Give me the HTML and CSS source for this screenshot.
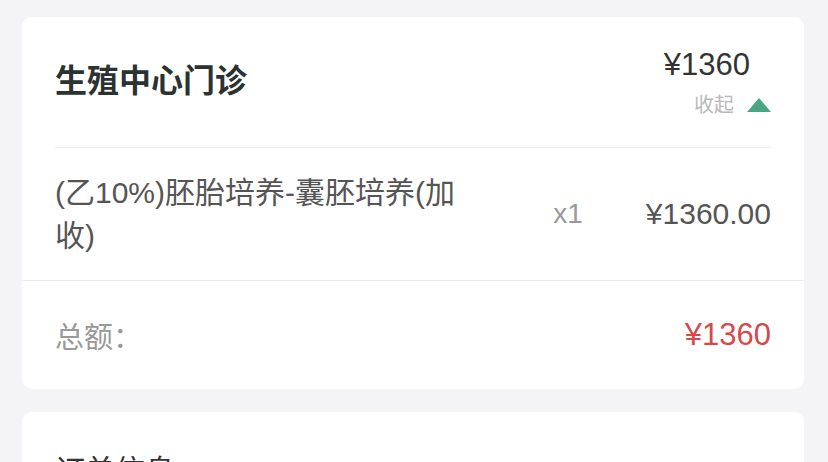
FILE: index.html
```html
<!DOCTYPE html>
<html lang="zh-CN">
<head>
  <meta charset="UTF-8">
  <meta name="viewport" content="width=device-width, initial-scale=1.0">
  <title>订单详情</title>
  <link rel="stylesheet" href="styles.css">
</head>
<body>

<div class="card">
  <div class="card-head">
    <div class="dept">生殖中心门诊</div>
    <div class="head-right">
      <div class="head-price">¥1360</div>
      <div class="toggle">收起 <span class="arrow-up"></span></div>
    </div>
  </div>

  <div class="item-row">
    <div class="item-name">(乙10%)胚胎培养-囊胚培养(加收)</div>
    <div class="item-qty">x1</div>
    <div class="item-price">¥1360.00</div>
  </div>

  <div class="total-row">
    <div class="total-label">总额：</div>
    <div class="total-price">¥1360</div>
  </div>
</div>

<div class="card">
  <div class="card-title">订单信息</div>
</div>

</body>
</html>
```

FILE: styles.css
```css
body {
  font-family: 'Liberation Sans', 'Noto Sans CJK SC', sans-serif;
  background-color: #f4f4f6;
  margin: 0;
  padding: 17px 24px 0 22px;
}

.card {
  background-color: #fff;
  border-radius: 10px;
  margin-bottom: 23px;
}

.card-head {
  margin: 0 33px;
  height: 131px;
  box-sizing: border-box;
  border-bottom: 1px solid #ececec;
  display: flex;
  justify-content: space-between;
  align-items: flex-start;
}

.dept {
  margin-top: 44px;
  font-size: 32px;
  line-height: 40px;
  font-weight: bold;
  color: #2b3231;
}

.head-right {
  padding-top: 28px;
  text-align: right;
}

.head-price {
  font-size: 31px;
  line-height: 40px;
  color: #333;
  padding-right: 21px;
}

.toggle {
  margin-top: 7px;
  font-size: 20px;
  line-height: 26px;
  color: #b9b9b9;
  display: flex;
  align-items: center;
  justify-content: flex-end;
}

.arrow-up {
  display: inline-block;
  width: 0;
  height: 0;
  margin-left: 13px;
  border-left: 12px solid transparent;
  border-right: 12px solid transparent;
  border-bottom: 14px solid #4aa585;
}

.item-row {
  display: flex;
  align-items: center;
  padding: 23px 33px;
  border-bottom: 1px solid #ececec;
}

.item-name {
  flex: 0 0 415px;
  font-size: 30px;
  line-height: 43px;
  color: #555;
}

.item-qty {
  margin-left: auto;
  font-size: 28px;
  color: #999;
}

.item-price {
  margin-left: 63px;
  font-size: 30px;
  color: #555;
}

.total-row {
  display: flex;
  justify-content: space-between;
  align-items: center;
  height: 108px;
  padding: 0 33px;
}

.total-label {
  font-size: 29px;
  color: #999;
}

.total-price {
  font-size: 31px;
  color: #d6494b;
}

.card-title {
  padding: 34px 33px;
  font-size: 30px;
  color: #333;
}
```
